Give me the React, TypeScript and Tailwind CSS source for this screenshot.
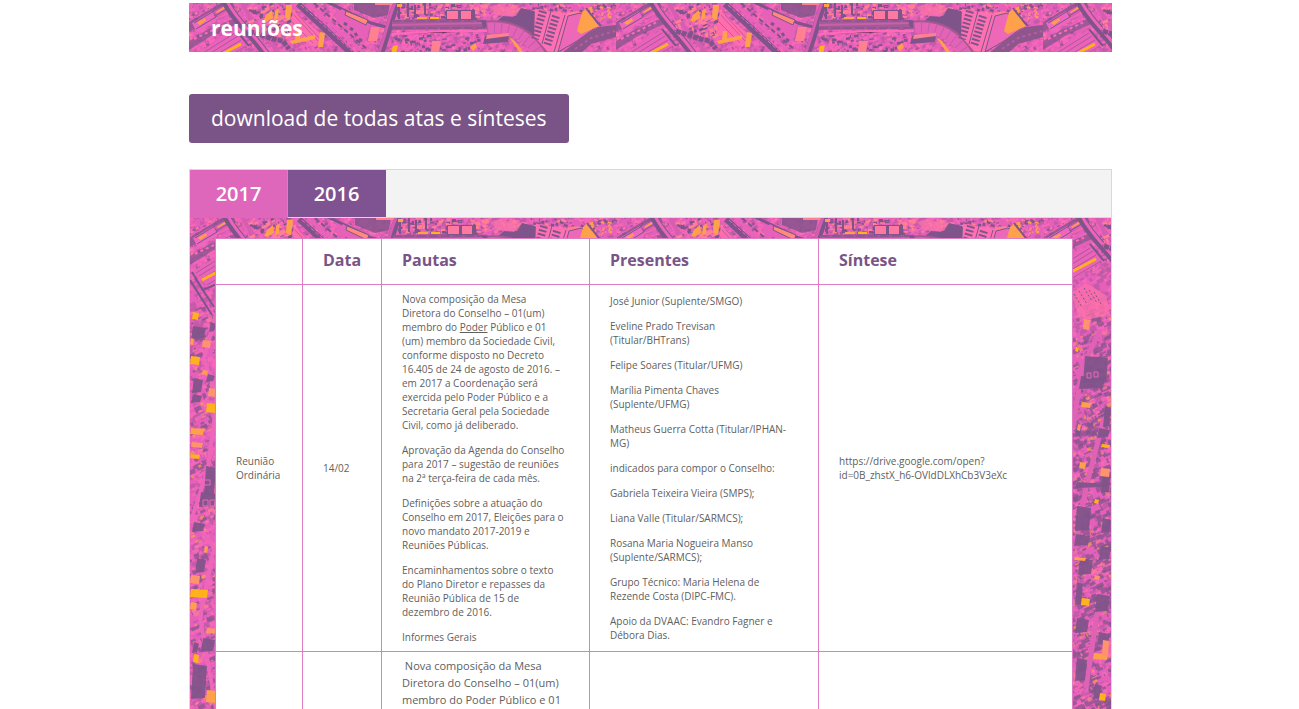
import { useState } from 'react'

const plum = '#7f548a'
const orange = '#ffa04a'
const yellow = '#ffb21c'
const salmon = '#ff8090'
const hot = '#ff69b8'

// small seeded generator so the houses always land in the same place
function rng(seed: number) {
  let s = seed
  return () => {
    s = (s * 16807) % 2147483647
    return s / 2147483647
  }
}

function scatter(seed: number, n: number, x: number, y: number, w: number, h: number, size: number, slope = -0.45) {
  const r = rng(seed)
  let d = ''
  for (let i = 0; i < n; i++) {
    const a = 1 + r() * size
    const b = 1 + r() * size * 0.6
    d += `M${(x + r() * w).toFixed(1)} ${(y + r() * h).toFixed(1)}l${a.toFixed(1)} ${(a * slope).toFixed(1)}l${(-b * slope).toFixed(1)} ${b.toFixed(1)}l${(-a).toFixed(1)} ${(-a * slope).toFixed(1)}z`
  }
  return d
}

const speckles = [
  { fill: '#b45aa2', d: scatter(11, 1000, -3, -3, 430, 56, 5) },
  { fill: hot, d: scatter(23, 1300, -3, -3, 430, 56, 4) },
  { fill: plum, d: scatter(37, 200, -3, -3, 430, 56, 3) },
  { fill: '#ff82a0', d: scatter(39, 160, -3, -3, 430, 56, 3) },
  { fill: '#b45aa2', d: scatter(41, 1000, -3, 50, 75, 442, 6) },
  { fill: hot, d: scatter(53, 900, -3, 50, 75, 442, 5) },
  { fill: plum, d: scatter(67, 420, -3, 90, 75, 400, 6) },
  { fill: plum, d: scatter(69, 420, 27, 125, 42, 366, 7) },
  { fill: salmon, d: scatter(71, 200, -3, 90, 75, 400, 5) },
  { fill: orange, d: scatter(73, 90, -3, 90, 75, 400, 4) },
]

const topHouses = [
  { fill: plum, d: scatter(83, 45, 58, 0, 48, 34, 4) },
  { fill: plum, d: scatter(89, 60, 207, 0, 80, 15, 4, 0) },
  { fill: plum, d: scatter(97, 45, 205, 31, 85, 18, 4, -0.1) },
  { fill: plum, d: scatter(101, 45, 340, 0, 85, 12, 3, 0.3) },
  { fill: salmon, d: scatter(103, 40, 58, 0, 48, 34, 5) },
  { fill: salmon, d: scatter(105, 40, 210, 0, 80, 15, 4, 0) },
  { fill: salmon, d: scatter(107, 45, 290, 0, 135, 12, 4, 0.3) },
  { fill: orange, d: scatter(109, 18, 395, 2, 30, 14, 3, 0.3) },
]

// dark roofs and tree clumps down both sides: x, y, w, h
const darkBlocks = [
  [0, 108, 16, 12], [18, 104, 8, 9], [1, 160, 12, 14], [15, 156, 10, 7], [0, 176, 12, 8],
  [13, 248, 13, 28], [8, 274, 18, 14], [1, 304, 14, 9], [4, 340, 12, 14], [10, 420, 15, 13],
  [1, 424, 8, 10], [0, 446, 17, 34], [38, 138, 26, 26], [34, 158, 27, 12], [58, 188, 9, 20],
  [30, 206, 8, 12], [52, 210, 14, 9], [30, 264, 35, 5], [56, 252, 11, 22], [30, 288, 17, 24],
  [56, 300, 11, 14], [29, 316, 17, 11], [33, 340, 16, 16], [54, 328, 13, 13], [30, 364, 9, 22],
  [50, 376, 16, 17], [30, 400, 15, 14], [52, 414, 14, 12], [30, 440, 13, 22], [48, 466, 10, 14],
]

const orangeBlocks = [
  [2, 94, 6, 7], [0, 120, 3, 6], [12, 122, 8, 7], [0, 138, 9, 8], [12, 152, 5, 4],
  [18, 170, 8, 8], [16, 185, 10, 9], [0, 210, 13, 6], [1, 224, 11, 5], [0, 236, 9, 4],
  [14, 328, 3, 6], [0, 357, 9, 8], [0, 371, 17, 8], [0, 384, 6, 7], [16, 410, 10, 5],
  [3, 436, 5, 8], [16, 472, 10, 12], [39, 101, 6, 10], [31, 129, 3, 4], [37, 184, 9, 5],
  [33, 206, 3, 6], [57, 226, 8, 3], [35, 244, 6, 6], [56, 250, 9, 8], [50, 281, 4, 4],
  [30, 339, 11, 3], [50, 357, 5, 4], [37, 380, 8, 7], [49, 435, 14, 6], [58, 422, 6, 16],
  [55, 475, 6, 7],
]

function CityTexture({ id }: { id: string }) {
  return (
    <svg className="absolute inset-0 h-full w-full" aria-hidden="true">
      <defs>
        <pattern id={id} width="427" height="491" patternUnits="userSpaceOnUse">
          <rect width="427" height="491" fill="#e65fba" />
          {speckles.map((s, i) => <path key={i} d={s.d} fill={s.fill} opacity="0.7" />)}

          {/* roofs on the left block */}
          <path d="M0 19L32 0H44L46 4L0 29z" fill={plum} opacity=".75" />
          <path d="M3 20L23 8L28 17L8 30z" fill="#ee66bd" />
          <path d="M24 9L38 1L43 6L29 14z" fill="#dc5db5" />
          <path d="M5 20l20-12M7 26l20-12M26 13l15-9" stroke={plum} strokeWidth="1" />
          <path d="M8 20l4-3 3 2-4 3zM13 17l3-2 1 3-3 1zM27 9l9-6 1 2-9 5z" fill={orange} />
          <path d="M0 38L18 27L44 16L48 21L22 33L0 47z" fill={plum} opacity=".7" />
          <path d="M5 36l38-18" stroke={hot} strokeWidth="2" strokeDasharray="3 3" />
          <path d="M3 54L46 26L60 42L18 69z" fill="#ea62ba" />
          <path d="M6 55l40-25M9 58l40-25M12 61l40-24M17 67l40-24" stroke="#a95898" strokeWidth="1" />
          <path d="M12 62L52 41" stroke={yellow} strokeWidth="3" />
          <path d="M2 54l11 18 14-6M46 26l14 17" stroke={plum} strokeWidth="2" fill="none" />
          <path d="M0 62L22 97M5 60L24 89" stroke={plum} strokeWidth="2" />
          <path d="M27 75l15-10 20 12 4 20-30 6z" fill="#ff72a8" opacity=".7" />
          <path d="M30 76l8 13M35 73l8 13M40 70l8 13M45 72l8 13M50 74l7 12" stroke={plum} strokeWidth="1" strokeDasharray="2 2" />

          {/* avenue */}
          <path d="M36-2C46 18 61 28 79 54C84 62 82 76 84 88" stroke={plum} strokeWidth="8" fill="none" />
          <path d="M38-2C48 18 63 28 81 54" stroke="#ee64ba" strokeWidth="3" fill="none" />
          <path d="M52-2C58 12 68 24 92 52" stroke="#d65eb2" strokeWidth="4" fill="none" />
          {topHouses.map((s, i) => <path key={i} d={s.d} fill={s.fill} />)}
          <path d="M60 28l12 4 12 4 10 2 6 8" stroke={plum} strokeWidth="5" fill="none" strokeDasharray="5 1" />
          <path d="M77 12l6-5 1 8-7 4-3-1zM97 2h6l-2 15-5-2zM86 8l4-2-1 9-4 2z" fill={orange} />

          {/* rail yard */}
          <path d="M104 8L136 34L126 44L100 30z" fill="#ff6dac" />
          <path d="M105 12l24 26M109 12l24 26M102 18l22 22" stroke="#c25ba0" strokeWidth="1" />
          <path d="M109 1L164 52" stroke={plum} strokeWidth="6" />
          <path d="M118 0L174 49" stroke="#ea62ba" strokeWidth="3" />
          <path d="M112 2l51 46" stroke="#ee66bd" strokeWidth="1" strokeDasharray="4 2" />
          <path d="M125 0L178 46" stroke={plum} strokeWidth="2" strokeDasharray="5 3" />
          <path d="M136-2L182 20L205 26" stroke={plum} strokeWidth="3" fill="none" />
          <path d="M145 14l8-8 28 17-6 19z" fill="#e761b9" />
          <path d="M161 25l3 2M155 20l3 2M166 30l2 3M170 36l3 2" stroke={plum} strokeWidth="3" />
          <path d="M100 38l26-6v4l-23 5zM131 29l5 1-2 14h-5zM107 28h4v8l-5 1z" fill={orange} />
          <path d="M157 8l22 9-2 5-21-10z" fill="#ff8b78" stroke={plum} strokeWidth="1" />
          <path d="M182 24h9l-3 14h-9z" fill={salmon} />
          <path d="M165-1h36l-2 13-14 3-20-8z" fill={plum} opacity=".8" />
          <path d="M186-1h18v3h-18z" fill={salmon} />
          <path d="M208 0C201 16 200 28 191 52" stroke={plum} strokeWidth="7" fill="none" />
          <path d="M206 0C199 16 198 28 189 52" stroke="#d45db0" strokeWidth="3" fill="none" />
          <path d="M204 43l5-1-2 9h-5z" fill={yellow} />
          <path d="M210 0v16M219 0v14M226 2v13M236 0v12" stroke={plum} strokeWidth="2" />
          <path d="M208 1h5v3h-5z" fill={orange} />

          {/* wide road */}
          <path d="M203 17L250 16L298 17V26L203 27z" fill="#a35a98" />
          <path d="M203 18h95M203 25h90" stroke={plum} strokeWidth="1" strokeDasharray="9 3" />
          <path d="M203 22L298 20" stroke="#c860aa" strokeWidth="2" />
          <path d="M203 31L255 28L298 28" stroke={hot} strokeWidth="2" />
          <path d="M241 14h9v2h-9z" fill={yellow} />
          <path d="M228 14h10v2h-10zM280 10h5v5h-5z" fill={orange} />
          <path d="M257 7h29v10h-29z" fill={plum} />
          <path d="M258 8h11v8h-11zM272 8h10v8h-10z" fill="#ff78a0" />
          <path d="M243 38h9l-2 11h-8z" fill={salmon} />
          <path d="M281 44l5-4 2 4-4 4z" fill={orange} />

          {/* park and curved blocks */}
          <path d="M292 17l14 3 8-7 10 1 8-9 13 3 8 11-2 8 8 12-15-7-14-4-14-1-10-5-12 3z" fill={plum} />
          <path d="M300 4l12-2 20 3-5 8-20-1z" fill="#fb75a6" opacity=".7" />
          <path d="M298 24C322 22 342 32 354 54" stroke="#a5598f" strokeWidth="13" fill="none" />
          <path d="M298 25C322 23 340 33 352 54" stroke="#e363b6" strokeWidth="11" fill="none" />
          <path d="M298 25C322 23 340 33 352 54" stroke="#c35ca8" strokeWidth="11" fill="none" strokeDasharray="1 6" />
          <path d="M296 33l24-2-1 8-25 2z" fill={plum} />
          <path d="M298 32l22-2v3l-23 3z" fill={salmon} />
          <path d="M320 34l6 4 9 12h-4z" fill={orange} />

          {/* warehouses */}
          <path d="M346 6L384 12L371 49L358 48L345 33z" fill="#ff70b2" />
          <path d="M354 8l-8 28M367 13l-9 30" stroke={plum} strokeWidth="8" strokeDasharray="2 2" />
          <path d="M362 8l-9 33M376 12l-11 37" stroke={plum} strokeWidth="1" />
          <path d="M379 13L391 10L407 24L388 38L369 49z" fill="#ed69b8" stroke={plum} strokeWidth="1" />
          <path d="M393 9l4-2 13 16-18 8-4-3z" fill={orange} />
          <path d="M397 5l12 15 3 3" stroke={plum} strokeWidth="2" fill="none" />
          <path d="M373 50L393 34L409 24L427 22V34L402 41L390 52z" fill="#8d568c" />
          <path d="M386 46l16-11 24-7" stroke="#b95ba2" strokeWidth="2" strokeDasharray="3 3" fill="none" />

          {/* blocks below the avenue */}
          <path d="M26 96L14 140L27 180L18 250L2 300L24 330L10 400L26 491" stroke="#ee66ba" strokeWidth="4" fill="none" />
          <path d="M56 112L38 150L29 210M60 200L42 270L31 330M54 390L42 470" stroke="#df62b5" strokeWidth="5" fill="none" />
          {darkBlocks.map(([x, y, w, h], i) => (
            <path key={i} d={`M${x + 3} ${y}l${w - 3} 2l-2 ${h - 2}l${3 - w} 1z`} fill={plum} opacity=".92" />
          ))}
          {orangeBlocks.map(([x, y, w, h], i) => (
            <path key={i} d={`M${x + 1} ${y}l${w} 1l-1 ${h}l${-w} -1z`} fill={i % 3 === 0 ? yellow : i % 3 === 1 ? orange : '#ff946c'} />
          ))}
          <path d="M14 262h6v5h-6zM13 282h5v6h-5zM20 282h5v6h-5zM43 155h4v5h-4zM50 154h4v5h-4z" fill="none" stroke="#e868bb" strokeWidth="1" />
        </pattern>
      </defs>
      <rect width="100%" height="100%" fill={`url(#${id})`} />
    </svg>
  )
}

const presentes = [
  'José Junior (Suplente/SMGO)',
  'Eveline Prado Trevisan (Titular/BHTrans)',
  'Felipe Soares (Titular/UFMG)',
  'Marília Pimenta Chaves (Suplente/UFMG)',
  'Matheus Guerra Cotta (Titular/IPHAN-MG)',
  'indicados para compor o Conselho:',
  'Gabriela Teixeira Vieira (SMPS);',
  'Liana Valle (Titular/SARMCS);',
  'Rosana Maria Nogueira Manso (Suplente/SARMCS);',
  'Grupo Técnico: Maria Helena de Rezende Costa (DIPC-FMC).',
  'Apoio da DVAAC: Evandro Fagner e Débora Dias.',
]

const years = ['2017', '2016']

const cell = 'border border-[#e07cc3] pl-5 align-middle'
const headCell = `${cell} pb-1`

export default function App() {
  const [year, setYear] = useState('2017')

  return (
    <main className="h-screen overflow-hidden bg-white px-4 pt-[3px] font-['Open_Sans',sans-serif] text-[#606060] lg:pl-[189px] lg:pr-[187px]">
      <header className="relative px-[22px] pt-[9px] pb-2">
        <CityTexture id="city-header" />
        <h1 className="relative text-[21px] leading-8 font-bold text-white">reuniões</h1>
      </header>

      <button type="button" className="mt-[42px] rounded-[3px] bg-[#7a5486] px-[22px] py-2 text-[21px] leading-[33px] text-white">
        download de todas atas e sínteses
      </button>

      <section className="mt-[26px] border border-[#d9d9d9]">
        <div role="tablist" className="flex border-b border-[#d9d9d9] bg-[#f3f3f3]">
          {years.map(y => (
            <button key={y} type="button" role="tab" aria-selected={year === y} onClick={() => setYear(y)}
              className={`w-[98px] border-r text-[20px] font-semibold text-white
                ${year === y ? '-mb-px h-12 border-[#b98fc0] bg-[#de66bb]' : 'h-[47px] border-[#7f5291] bg-[#7f5291]'}`}>
              {y}
            </button>
          ))}
        </div>

        <div role="tabpanel" className="relative pt-5 pr-[38px] pb-5 pl-[25px]">
          <CityTexture id="city-panel" />
          <table className="relative w-full table-fixed border-collapse bg-white text-left text-[10px] leading-[14px]">
            <colgroup>
              <col className="w-[87px]" />
              <col className="w-[79px]" />
              <col className="w-[208px]" />
              <col className="w-[229px]" />
              <col />
            </colgroup>
            <thead>
              <tr className="h-[46px] text-[16px] leading-5 font-bold text-[#7a5486]">
                <th className={headCell}></th>
                <th className={headCell}>Data</th>
                <th className={headCell}>Pautas</th>
                <th className={headCell}>Presentes</th>
                <th className={headCell}>Síntese</th>
              </tr>
            </thead>
            <tbody>
              <tr className="h-[367px]">
                <td className={`${cell} pr-5`}>Reunião Ordinária</td>
                <td className={`${cell} pr-5`}>14/02</td>
                <td className={`${cell} pr-6`}>
                  <div className="flex flex-col gap-[11px]">
                    <p>
                      Nova composição da Mesa Diretora do Conselho – 01(um) membro do <u>Poder</u> Público e 01 (um) membro
                      da Sociedade Civil, conforme disposto no Decreto 16.405 de 24 de agosto de 2016. – em 2017 a
                      Coordenação será exercida pelo Poder Público e a Secretaria Geral pela Sociedade Civil, como já
                      deliberado.
                    </p>
                    <p>Aprovação da Agenda do Conselho para 2017 – sugestão de reuniões na 2ª terça-feira de cada mês.</p>
                    <p>Definições sobre a atuação do Conselho em 2017, Eleições para o novo mandato 2017-2019 e Reuniões Públicas.</p>
                    <p>Encaminhamentos sobre o texto do Plano Diretor e repasses da Reunião Pública de 15 de dezembro de 2016.</p>
                    <p>Informes Gerais</p>
                  </div>
                </td>
                <td className={`${cell} pr-7`}>
                  <div className="flex flex-col gap-[11px]">
                    {presentes.map(p => <p key={p}>{p}</p>)}
                  </div>
                </td>
                <td className={`${cell} pr-5`}>https://drive.google.com/open?<wbr />id=0B_zhstX_h6-OVldDLXhCb3V3eXc</td>
              </tr>
              <tr>
                <td className={cell}></td>
                <td className={cell}></td>
                <td className={`${cell} py-[5px] pr-5 text-[11px] leading-[17px]`}>
                  &nbsp;Nova composição da Mesa Diretora do Conselho – 01(um) membro do Poder Público e 01
                </td>
                <td className={cell}></td>
                <td className={cell}></td>
              </tr>
            </tbody>
          </table>
        </div>
      </section>
    </main>
  )
}
